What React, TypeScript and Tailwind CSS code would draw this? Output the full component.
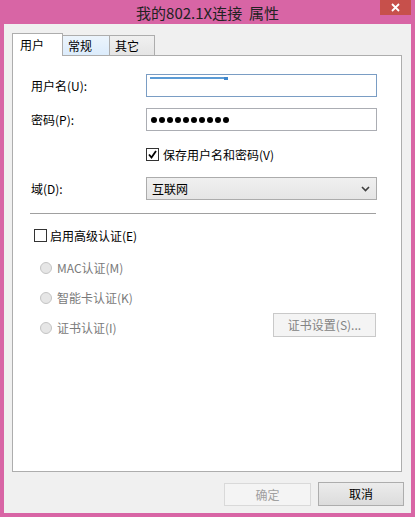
import React from "react";

const font = { fontFamily: '"Noto Sans CJK SC", "Noto Sans", sans-serif' };

const Radio = ({ label }: { label: string }) => (
  <div className="flex items-center">
    <span className="h-[12px] w-[12px] rounded-full border border-[#c4c4c4] bg-[#e6e6e6]"></span>
    <span className="ml-[5px] text-[12px] leading-none text-[#7a7a7a]">{label}</span>
  </div>
);

const App = () => {
  return (
    <div className="flex h-[517px] w-[415px] flex-col bg-[#d865a5]" style={font}>
      <div className="relative flex h-[24px] items-center justify-center">
        <span className="whitespace-pre text-[15px] leading-none text-[#222]">我的802.1X连接  属性</span>
        <div className="absolute right-[4px] top-0 flex h-[15px] w-[31px] items-center justify-center bg-[#c7504b]">
          <svg width="9" height="9" viewBox="0 0 9 9">
            <path d="M1 1 L8 8 M8 1 L1 8" stroke="#fff" strokeWidth="1.8" />
          </svg>
        </div>
      </div>

      <div className="mx-[4px] mb-[4px] flex flex-1 flex-col bg-[#f0f0f0] pl-[8px] pr-[7px] pt-[9px]">
        <div className="flex h-[22px] items-end">
          <div className="relative z-10 -mb-[1px] flex h-[23px] w-[51px] items-center border border-b-0 border-[#adadad] bg-white pl-[7px] text-[12px]">
            用户
          </div>
          <div className="flex h-[20px] w-[47px] items-center border-t border-r border-[#adadad] bg-gradient-to-b from-[#ecf4fc] to-[#dcecfc] pl-[5px] text-[12px]">
            常规
          </div>
          <div className="flex h-[20px] w-[45px] items-center border-t border-r border-[#adadad] bg-gradient-to-b from-[#f0f0f0] to-[#e5e5e5] pl-[5px] text-[12px]">
            其它
          </div>
        </div>

        <div className="mr-[2px] flex flex-1 flex-col border border-[#adadad] bg-white text-[12px] text-black">
          <div className="mt-[18px] flex items-center pl-[18px]">
            <span className="w-[115px]">用户名(U):</span>
            <div className="relative h-[23px] w-[231px] border border-[#7a9dc4] bg-white">
              <div className="absolute left-[3px] top-[2px] h-[2px] w-[74px] bg-[#5b9bd5]"></div>
              <div className="absolute left-[77px] top-[2px] h-[3px] w-[4px] bg-[#3e86cc]"></div>
            </div>
          </div>

          <div className="mt-[11px] flex items-center pl-[18px]">
            <span className="w-[115px]">密码(P):</span>
            <div className="flex h-[23px] w-[231px] items-center gap-[2px] border border-[#abadb3] bg-white pl-[4px]">
              {Array.from({ length: 10 }).map((_, i) => (
                <span key={i} className="h-[6px] w-[6px] rounded-full bg-black"></span>
              ))}
            </div>
          </div>

          <div className="mt-[17px] flex items-center pl-[133px]">
            <span className="flex h-[13px] w-[13px] items-center justify-center border border-[#333] bg-white">
              <svg width="11" height="11" viewBox="0 0 11 11">
                <path d="M2 5.5 L4.5 8.5 L9 2" fill="none" stroke="#000" strokeWidth="1.8" />
              </svg>
            </span>
            <span className="ml-[4px] leading-none">保存用户名和密码(V)</span>
          </div>

          <div className="mt-[16px] flex items-center pl-[18px]">
            <span className="w-[115px]">域(D):</span>
            <div className="flex h-[23px] w-[231px] items-center justify-between border border-[#acacac] bg-gradient-to-b from-[#f0f0f0] to-[#e5e5e5] pl-[5px] pr-[6px]">
              <span>互联网</span>
              <svg width="9" height="6" viewBox="0 0 9 6">
                <path d="M1 1 L4.5 4.5 L8 1" fill="none" stroke="#404040" strokeWidth="1.6" />
              </svg>
            </div>
          </div>

          <div className="ml-[17px] mt-[13px] h-[1px] w-[346px] bg-[#a0a0a0]"></div>

          <div className="ml-[21px] mt-[15px] flex items-center">
            <span className="h-[13px] w-[13px] border border-[#333] bg-white"></span>
            <span className="ml-[3px] leading-none">启用高级认证(E)</span>
          </div>

          <div className="ml-[27px] mt-[20px]">
            <Radio label="MAC认证(M)" />
          </div>
          <div className="ml-[27px] mt-[18px]">
            <Radio label="智能卡认证(K)" />
          </div>
          <div className="ml-[27px] mt-[9px] flex w-[336px] items-center justify-between">
            <div className="mt-[6px]">
              <Radio label="证书认证(I)" />
            </div>
            <div className="flex h-[24px] w-[103px] items-center justify-center border border-[#c9c9c9] bg-[#f4f4f4] text-[#838383]">
              证书设置(S)...
            </div>
          </div>
        </div>

        <div className="mb-[7px] mt-[10px] flex justify-end gap-[7px] text-[12px]">
          <div className="mt-[1px] flex h-[23px] w-[87px] items-center justify-center border border-[#d9d9d9] bg-[#f4f4f4] text-[#a0a0a0]">
            确定
          </div>
          <div className="flex h-[24px] w-[86px] items-center justify-center border border-[#adadad] bg-gradient-to-b from-[#ececec] to-[#dcdcdc] text-black">
            取消
          </div>
        </div>
      </div>
    </div>
  );
};

export default App;
